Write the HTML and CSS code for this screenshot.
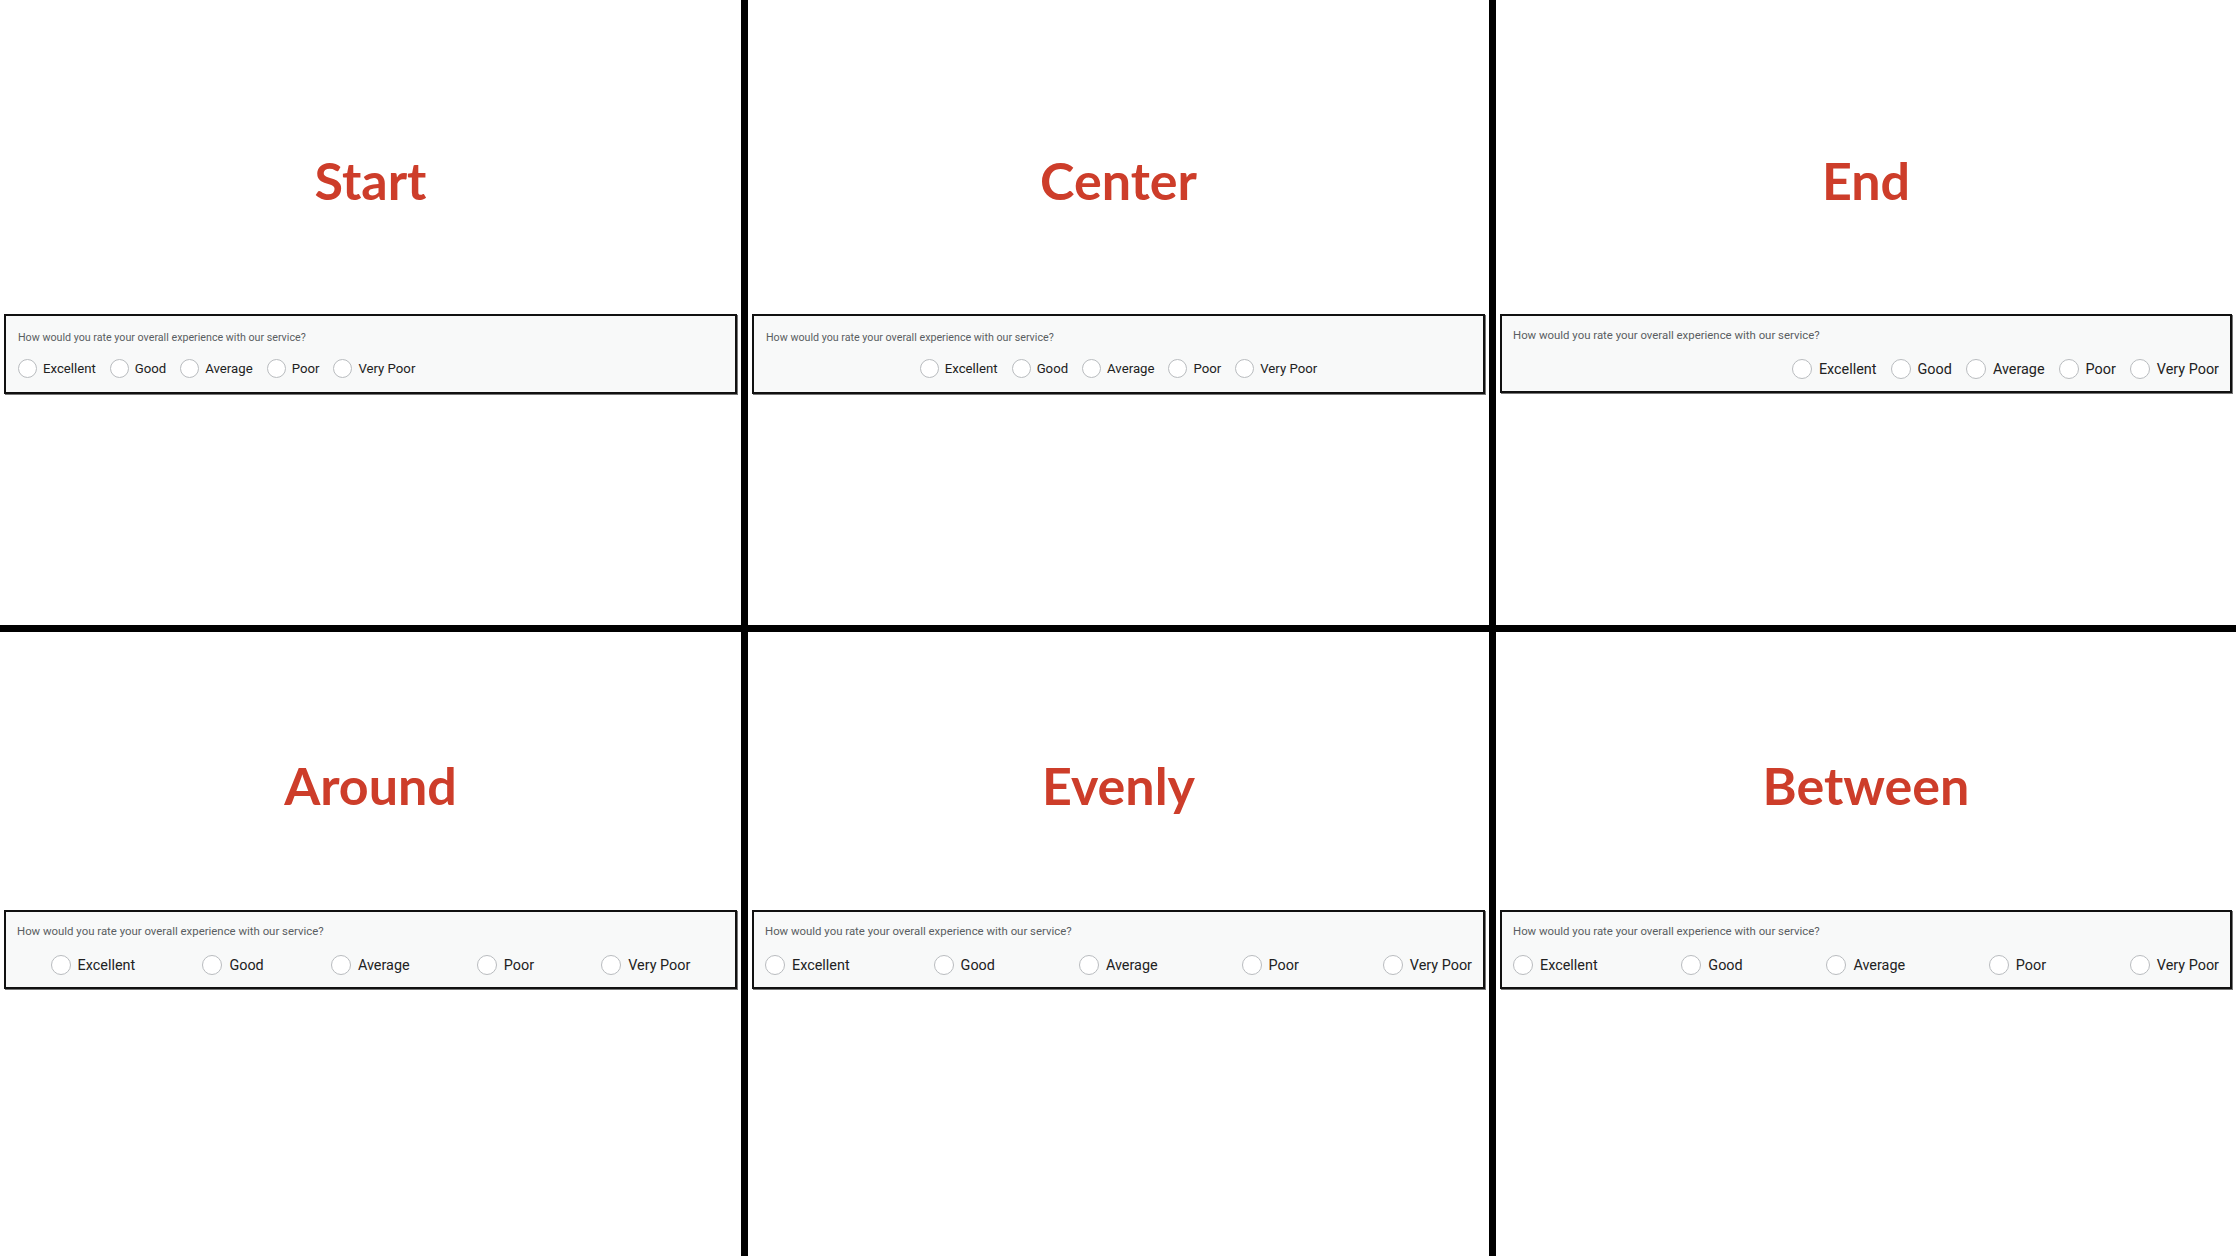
FILE: index.html
```html
<!DOCTYPE html>
<html lang="en">

<head>
  <meta charset="UTF-8">
  <meta name="viewport" content="width=device-width, initial-scale=1">
  <title>Justify Content</title>
  <link rel="stylesheet" href="styles.css">
</head>

<body>
  <div class="board">

    <!-- linha de cima -->
    <div class="cell top">
      <h1>Start</h1>
      <div class="card">
        <p class="ask">How would you rate your overall experience with our service?</p>
        <div class="opts start">
          <label class="opt"><input type="radio" name="r1"><span>Excellent</span></label>
          <label class="opt"><input type="radio" name="r1"><span>Good</span></label>
          <label class="opt"><input type="radio" name="r1"><span>Average</span></label>
          <label class="opt"><input type="radio" name="r1"><span>Poor</span></label>
          <label class="opt"><input type="radio" name="r1"><span>Very Poor</span></label>
        </div>
      </div>
    </div>

    <div class="cell top">
      <h1>Center</h1>
      <div class="card">
        <p class="ask">How would you rate your overall experience with our service?</p>
        <div class="opts center">
          <label class="opt"><input type="radio" name="r2"><span>Excellent</span></label>
          <label class="opt"><input type="radio" name="r2"><span>Good</span></label>
          <label class="opt"><input type="radio" name="r2"><span>Average</span></label>
          <label class="opt"><input type="radio" name="r2"><span>Poor</span></label>
          <label class="opt"><input type="radio" name="r2"><span>Very Poor</span></label>
        </div>
      </div>
    </div>

    <div class="cell top">
      <h1>End</h1>
      <div class="card big">
        <p class="ask">How would you rate your overall experience with our service?</p>
        <div class="opts end">
          <label class="opt"><input type="radio" name="r3"><span>Excellent</span></label>
          <label class="opt"><input type="radio" name="r3"><span>Good</span></label>
          <label class="opt"><input type="radio" name="r3"><span>Average</span></label>
          <label class="opt"><input type="radio" name="r3"><span>Poor</span></label>
          <label class="opt"><input type="radio" name="r3"><span>Very Poor</span></label>
        </div>
      </div>
    </div>

    <!-- linha de baixo -->
    <div class="cell bottom">
      <h1>Around</h1>
      <div class="card big">
        <p class="ask">How would you rate your overall experience with our service?</p>
        <div class="opts around">
          <label class="opt"><input type="radio" name="r4"><span>Excellent</span></label>
          <label class="opt"><input type="radio" name="r4"><span>Good</span></label>
          <label class="opt"><input type="radio" name="r4"><span>Average</span></label>
          <label class="opt"><input type="radio" name="r4"><span>Poor</span></label>
          <label class="opt"><input type="radio" name="r4"><span>Very Poor</span></label>
        </div>
      </div>
    </div>

    <div class="cell bottom">
      <h1>Evenly</h1>
      <div class="card big">
        <p class="ask">How would you rate your overall experience with our service?</p>
        <div class="opts evenly">
          <label class="opt"><input type="radio" name="r5"><span>Excellent</span></label>
          <label class="opt"><input type="radio" name="r5"><span>Good</span></label>
          <label class="opt"><input type="radio" name="r5"><span>Average</span></label>
          <label class="opt"><input type="radio" name="r5"><span>Poor</span></label>
          <label class="opt"><input type="radio" name="r5"><span>Very Poor</span></label>
        </div>
      </div>
    </div>

    <div class="cell bottom">
      <h1>Between</h1>
      <div class="card big">
        <p class="ask">How would you rate your overall experience with our service?</p>
        <div class="opts between">
          <label class="opt"><input type="radio" name="r6"><span>Excellent</span></label>
          <label class="opt"><input type="radio" name="r6"><span>Good</span></label>
          <label class="opt"><input type="radio" name="r6"><span>Average</span></label>
          <label class="opt"><input type="radio" name="r6"><span>Poor</span></label>
          <label class="opt"><input type="radio" name="r6"><span>Very Poor</span></label>
        </div>
      </div>
    </div>

  </div>
</body>

</html>
```

FILE: styles.css
```css
body {
  margin: 0px;
  background-color: #000000;
  font-family: Roboto, "Liberation Sans", sans-serif;
}

.board {
  display: grid;
  grid-template-columns: 741px 741px 1fr;
  grid-template-rows: 625px 1fr;
  gap: 7px;
  height: 100vh;
  background-color: #000000;
}

.cell {
  background-color: #FFFFFF;
  display: flex;
  flex-direction: column;
  padding: 0 4px;
}

h1 {
  margin: 0;
  text-align: center;
  font-family: Lato, "Open Sans", sans-serif;
  font-weight: 700;
  font-size: 52px;
  line-height: 52px;
  color: #CD3D2A;
}

.top {
  padding-top: 154px;
}

.top h1 {
  margin-bottom: 108px;
}

.bottom {
  padding-top: 127px;
}

.bottom h1 {
  margin-bottom: 99px;
}

.card {
  background-color: #F8F9F9;
  border: 2px solid #111111;
  box-shadow: 1px 1px 0px #777777;
  display: flex;
  flex-direction: column;
  padding: 15px 12px 14px;
  gap: 14px;
}

.card.big {
  padding: 12px 11px 12px;
  gap: 16px;
}

.ask {
  margin: 0;
  color: #5A5E62;
  font-size: 10.7px;
  line-height: 14px;
}

.big .ask {
  font-size: 11.4px;
  line-height: 15px;
}

.opts {
  display: flex;
  align-items: center;
}

.opt {
  display: flex;
  align-items: center;
  gap: 6px;
  font-size: 13.2px;
  color: #222222;
}

.big .opt {
  font-size: 14.4px;
  gap: 7px;
}

.opt input {
  appearance: none;
  -webkit-appearance: none;
  margin: 0;
  width: 19px;
  height: 19px;
  border: 1px solid #B9BCBF;
  border-radius: 50%;
  background-color: #FFFFFF;
}

.big .opt input {
  width: 20px;
  height: 20px;
}

.start {
  justify-content: flex-start;
  gap: 14px;
}

.center {
  justify-content: center;
  gap: 14px;
}

.end {
  justify-content: flex-end;
  gap: 14px;
}

.around {
  justify-content: space-around;
}

.evenly {
  justify-content: space-between;
}

.between {
  justify-content: space-between;
}
```
